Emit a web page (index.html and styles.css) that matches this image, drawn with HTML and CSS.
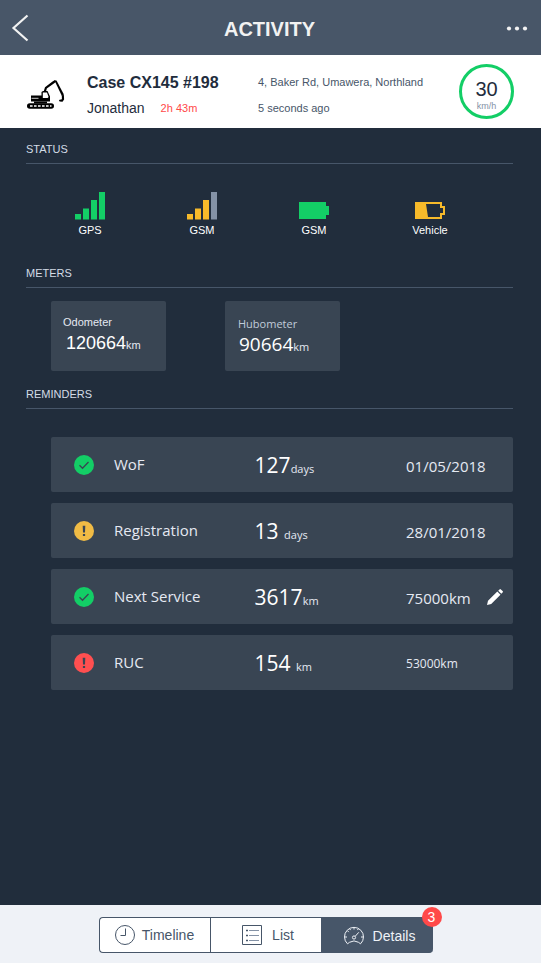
FILE: index.html
```html
<!DOCTYPE html>
<html lang="en">
<head>
<meta charset="utf-8">
<meta name="viewport" content="width=device-width, initial-scale=1">
<title>Activity</title>
<link rel="stylesheet" href="styles.css">
</head>
<body>
<header class="topbar">
  <button class="icon-button" type="button" aria-label="Back">
    <svg width="18" height="28" viewBox="0 0 18 28" fill="none" stroke="#f2f2f2" stroke-width="2.200"><path d="M16.500 1.500 2.500 14 16.500 26.500"/></svg>
  </button>
  <h1 class="title">ACTIVITY</h1>
  <button class="icon-button end" type="button" aria-label="More">
    <svg width="22" height="6" viewBox="0 0 22 6" fill="#f2f2f2"><circle cx="3" cy="3.500" r="2.100"/><circle cx="11" cy="3.500" r="2.100"/><circle cx="19" cy="3.500" r="2.100"/></svg>
  </button>
</header>

<section class="asset">
  <svg class="digger" width="38" height="30" viewBox="0 0 38 30">
    <rect x="0" y="23.200" width="27" height="5.600" rx="2.800" fill="#000"/>
    <path d="M3 26h21.500" stroke="#fff" stroke-width="1.400" stroke-dasharray="2.600 1.400"/>
    <path d="M7 21.500h13v2H7z" fill="#000"/>
    <path d="M4 15.500h10.500V12l1.500-1h4.500l2.500 5.500v5H4z" fill="#000"/>
    <path d="M4.500 18.300h7" stroke="#fff" stroke-width=".8"/>
    <path d="M15.800 12.500h4.200l1.600 4.500-1 1h-4.800z" fill="#fff"/>
    <path d="M16.500 12 18 7.200 25.500 1.500 28 0l1 1.700-1.800 1.500-7.400 5.200-.9 3.600z" fill="#000"/>
    <path d="m27.500.6 2-.2 7.400 14.200-2 1.300z" fill="#000"/>
    <path d="m34.800 15.200 2.100-.2.200 4.500-1.600 2.300-2.900-.2-.7-1.500 3-.8z" fill="#000"/>
  </svg>
  <div class="who">
    <h2 class="machine">Case CX145 #198</h2>
    <p class="driver"><span>Jonathan</span><span class="duration">2h 43m</span></p>
  </div>
  <div class="where">
    <p>4, Baker Rd, Umawera, Northland</p>
    <p>5 seconds ago</p>
  </div>
  <div class="speed"><span class="speed-value">30</span><span class="speed-unit">km/h</span></div>
</section>

<main class="content">
  <section>
    <h3 class="heading">STATUS</h3>
    <ul class="status">
      <li>
        <svg width="30" height="28" viewBox="0 0 30 28" fill="#13ce66"><path d="M0 22h6v5.500H0zM8 16.500h6v11H8zM16 8h6v19.500h-6zM24 0h6v27.500h-6z"/></svg>
        GPS
      </li>
      <li>
        <svg width="30" height="28" viewBox="0 0 30 28" fill="#f7ba2a"><path d="M0 22h6v5.500H0zM8 16.500h6v11H8zM16 8h6v19.500h-6z"/><path d="M24 0h6v27.500h-6z" fill="#8492a6"/></svg>
        GSM
      </li>
      <li>
        <svg width="30" height="28" viewBox="0 0 30 28"><path d="M0 10h27v4h3v9h-3v4H0z" fill="#13ce66"/></svg>
        GSM
      </li>
      <li>
        <svg width="30" height="28" viewBox="0 0 30 28"><path fill-rule="evenodd" d="M0 10h27v4h3v9h-3v4H0zM11 12l2 13h12v-4h3v-5h-3v-4z" fill="#f7ba2a"/></svg>
        Vehicle
      </li>
    </ul>
  </section>

  <section>
    <h3 class="heading">METERS</h3>
    <dl class="meters">
      <div class="meter">
        <dt>Odometer</dt>
        <dd>120664<small>km</small></dd>
      </div>
      <div class="meter hub">
        <dt>Hubometer</dt>
        <dd>90664<small>km</small></dd>
      </div>
    </dl>
  </section>

  <section>
    <h3 class="heading">REMINDERS</h3>
    <table class="reminders">
      <colgroup><col class="col-state"><col class="col-name"><col class="col-left"><col></colgroup>
      <tbody>
        <tr>
          <td class="state"><svg width="20" height="20" viewBox="0 0 20 20" role="img" aria-label="OK"><circle cx="10" cy="10" r="10" fill="#13ce66"/><path d="m5.500 10.300 3 3 6-6.300" fill="none" stroke="#394553" stroke-width="1.300"/></svg></td>
          <th scope="row">WoF</th>
          <td class="left">127<small>days</small></td>
          <td class="due">01/05/2018</td>
        </tr>
        <tr>
          <td class="state"><svg width="20" height="20" viewBox="0 0 20 20" role="img" aria-label="Due soon"><circle cx="10" cy="10" r="10" fill="#f0bb45"/><path d="M8.700 4.800h2.600l-.3 6.700H9zM8.900 12.900h2.200v2.200H8.900z" fill="#394553"/></svg></td>
          <th scope="row">Registration</th>
          <td class="left">13 <small>days</small></td>
          <td class="due">28/01/2018</td>
        </tr>
        <tr>
          <td class="state"><svg width="20" height="20" viewBox="0 0 20 20" role="img" aria-label="OK"><circle cx="10" cy="10" r="10" fill="#13ce66"/><path d="m5.500 10.300 3 3 6-6.300" fill="none" stroke="#394553" stroke-width="1.300"/></svg></td>
          <th scope="row">Next Service</th>
          <td class="left">3617<small>km</small></td>
          <td class="due"><div class="editable">75000km
            <button class="edit" type="button" aria-label="Edit next service"><svg width="16" height="16" viewBox="0 0 16 16" fill="#fff"><path d="m0 16 1-4.200L10.300 2.500l3.200 3.200L4.200 15zM11.200 1.700 12.500.4q.7-.7 1.400 0l1.700 1.700q.7.700 0 1.400L14.300 4.800z"/></svg></button></div></td>
        </tr>
        <tr>
          <td class="state"><svg width="20" height="20" viewBox="0 0 20 20" role="img" aria-label="Overdue"><circle cx="10" cy="10" r="10" fill="#ff4f50"/><path d="M8.700 4.800h2.600l-.3 6.700H9zM8.900 12.900h2.200v2.200H8.900z" fill="#394553"/></svg></td>
          <th scope="row">RUC</th>
          <td class="left">154 <small>km</small></td>
          <td class="due compact">53000km</td>
        </tr>
      </tbody>
    </table>
  </section>
</main>

<footer class="bottom">
  <nav class="tabs">
    <a class="tab" href="#timeline">
      <svg width="20" height="20" viewBox="0 0 20 20" fill="none" stroke="#475669"><circle cx="10" cy="10" r="9.500"/><path d="M10.500 3.500v7h-5"/></svg>
      Timeline
    </a>
    <a class="tab" href="#list">
      <svg width="20" height="20" viewBox="0 0 20 20" fill="none" stroke="#475669"><path d="M.5.500h19v19H.5z"/><path d="M4 5.500h2M4 10.500h2M4 15.500h2" stroke-width="1.600"/><path d="M7 5.500h10M7 10.500h10M7 15.500h10" stroke="#8492a6"/></svg>
      List
    </a>
    <a class="tab active" href="#details" aria-current="page">
      <svg width="20" height="20" viewBox="0 0 20 20" fill="none" stroke="#eff2f7"><path d="M3.500 17.800A9.500 9.500 0 1 1 16.500 17.800L14.500 16.300Q10 13.500 5.500 16.300z"/><circle cx="10" cy="11.500" r="1.600"/><path d="m11.200 10.300 3.600-4M10 1.500v2M.8 11H3M17 11h2.200M3.500 4.800l1.300 1.300M5.800 2.800l.7 1.300M14.200 2.800l-.7 1.300"/></svg>
      Details
      <span class="badge">3</span>
    </a>
  </nav>
</footer>
</body>
</html>
```

FILE: styles.css
```css
* {
  box-sizing: border-box;
}

body {
  margin: 0;
  min-height: 100vh;
  display: flex;
  flex-direction: column;
  background: #212d3c;
  color: #fff;
  font-family: "Liberation Sans", Arial, sans-serif;
  font-size: 11px;
  line-height: 16px;
}

h1, h2, h3, p, ul, dl, dd {
  margin: 0;
  padding: 0;
}

button {
  padding: 0;
  border: 0;
  background: none;
  cursor: pointer;
}

svg {
  display: block;
  flex: none;
}

.topbar {
  display: grid;
  grid-template-columns: 40px 1fr 40px;
  align-items: center;
  height: 55px;
  padding: 0 13px 0 11px;
  background: #485668;
}

.icon-button {
  display: flex;
}

.icon-button.end {
  justify-content: flex-end;
}

.title {
  padding-top: 3px;
  color: #f2f2f2;
  font-size: 20px;
  line-height: 24px;
  text-align: center;
}

.asset {
  display: flex;
  align-items: center;
  height: 73px;
  padding: 0 27px;
  background: #fff;
  color: #1f2d3d;
}

.digger {
  margin-top: 6px;
}

.who {
  width: 171px;
  margin-left: 22px;
  padding-top: 7px;
  flex: none;
}

.machine {
  font-size: 16px;
  line-height: 26px;
}

.driver {
  display: flex;
  gap: 16px;
  font-size: 14px;
  line-height: 24px;
}

.duration {
  color: #ff4949;
  font-size: 11px;
}

.where {
  flex: 1;
  padding-top: 7px;
  color: #475669;
  line-height: 26px;
}

.speed {
  display: flex;
  flex: none;
  flex-direction: column;
  align-items: center;
  justify-content: center;
  width: 55px;
  height: 55px;
  border: 3px solid #13ce66;
  border-radius: 50%;
}

.speed-value {
  padding-top: 6px;
  font-size: 20px;
  line-height: 22px;
}

.speed-unit {
  color: #8492a6;
  font-size: 9px;
  line-height: 12px;
}

.content {
  flex: 1;
  padding: 13px 28px 24px 26px;
}

.heading {
  padding-bottom: 6px;
  border-bottom: 1px solid #475669;
  color: #d3dce6;
  font-size: 11px;
  font-weight: 400;
}

.status {
  display: grid;
  grid-template-columns: 112fr 112fr 112fr 120fr;
  padding: 28px 23px 27px 8px;
  list-style: none;
}

.status li {
  display: flex;
  flex-direction: column;
  align-items: center;
  gap: 2px;
}

.meters {
  display: flex;
  gap: 59px;
  padding: 13px 0 15px 25px;
}

.meter {
  width: 115px;
  height: 70px;
  padding: 13px 12px;
  border-radius: 2px;
  background: #394553;
}

.meter dt {
  color: #e5e9f2;
}

.meter dd {
  padding-left: 3px;
  font-size: 18px;
  line-height: 26px;
}

.meter small {
  color: #e5e9f2;
  font-size: 11px;
}

.hub {
  padding: 15px 13px;
  font-family: "Open Sans", "Noto Sans", sans-serif;
}

.hub dt {
  color: #c0ccda;
}

.hub dd {
  padding-left: 1px;
  font-size: 19px;
  line-height: 24px;
}

.reminders {
  width: calc(100% - 25px);
  margin: 17px 0 0 25px;
  border-spacing: 0 11px;
  table-layout: fixed;
  font-family: "Open Sans", "Noto Sans", sans-serif;
  font-size: 15px;
  line-height: 24px;
}

.col-state {
  width: 63px;
}

.col-name {
  width: 30%;
}

.col-left {
  width: 33%;
}

.reminders td,
.reminders th {
  height: 55px;
  padding: 0 0 2px;
  background: #394553;
  color: #e5e9f2;
  font-weight: 400;
  text-align: left;
  white-space: nowrap;
}

.reminders .state {
  padding: 0 0 0 23px;
  border-radius: 2px 0 0 2px;
}

.reminders .left {
  padding: 4px 0 0 2px;
  color: #fff;
  font-size: 21px;
}

.reminders small {
  color: #e5e9f2;
  font-size: 11px;
}

.reminders .due {
  padding: 3px 10px 0 1px;
  border-radius: 0 2px 2px 0;
}

.reminders .compact {
  font-size: 12px;
}

.editable {
  display: flex;
  align-items: center;
  justify-content: space-between;
}

.edit {
  padding-bottom: 3px;
}

.bottom {
  display: flex;
  justify-content: center;
  padding: 12px 10px 10px 0;
  background: #eff2f7;
}

.tabs {
  display: grid;
  grid-template-columns: 111fr 111fr 112fr;
  width: 334px;
  height: 36px;
}

.tab {
  position: relative;
  display: flex;
  align-items: center;
  justify-content: center;
  gap: 7px;
  border: 1px solid #475669;
  border-right: 0;
  border-radius: 4px 0 0 4px;
  background: #fff;
  color: #475669;
  font-size: 14px;
  text-decoration: none;
}

.tab + .tab {
  gap: 10px;
  padding-left: 5px;
  border-radius: 0;
}

.tab + .tab.active {
  padding-top: 2px;
  gap: 9px;
  border-radius: 0 4px 4px 0;
  background: #475669;
  color: #eff2f7;
}

.badge {
  position: absolute;
  top: -11px;
  right: -9px;
  width: 20px;
  height: 20px;
  border-radius: 50%;
  background: #ff4949;
  color: #fff;
  line-height: 20px;
  text-align: center;
}
```
